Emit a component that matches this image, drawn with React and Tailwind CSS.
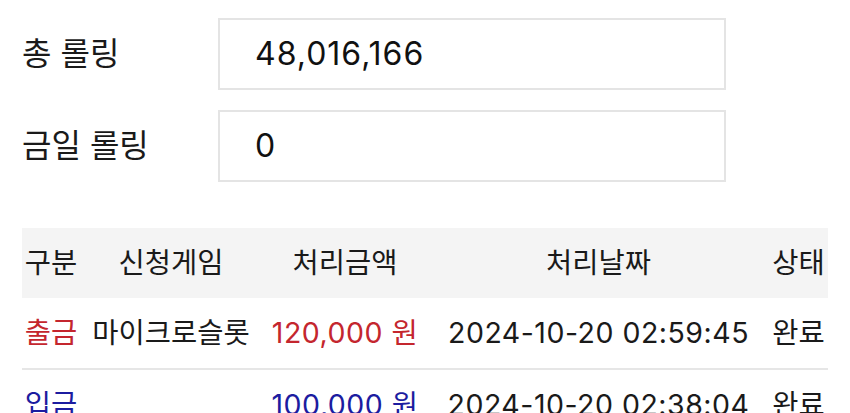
const font = { fontFamily: 'Inter, "Noto Sans CJK KR", sans-serif' };

const rows = [
  { type: '출금', game: '마이크로슬롯', amount: '120,000 원', date: '2024-10-20 02:59:45', status: '완료', color: 'text-[#c4262e]' },
  { type: '입금', game: '', amount: '100,000 원', date: '2024-10-20 02:38:04', status: '완료', color: 'text-[#1c1ca0]' },
];

const cols = 'grid grid-cols-[58px_182px_166px_341px_59px] text-center';

const Field = ({ label, value }) => (
  <div className="flex items-center">
    <div className="w-[196px] text-[32px] text-[#1a1a1a]">{label}</div>
    <div className="w-[508px] h-[72px] border-2 border-[#e4e4e4] flex items-center pl-[35px] text-[32px] tracking-[1px] text-[#111]">
      {value}
    </div>
  </div>
);

const App = () => (
  <div className="w-[850px] h-[413px] overflow-hidden bg-white pl-[22px] pt-[18px]" style={font}>
    <div className="flex flex-col gap-[20px]">
      <Field label="총 롤링" value="48,016,166" />
      <Field label="금일 롤링" value="0" />
    </div>
    <div className="mt-[46px] w-[806px] text-[28.5px] text-[#1a1a1a]">
      <div className={`${cols} h-[70px] items-center bg-[#f4f4f4]`}>
        <div>구분</div>
        <div>신청게임</div>
        <div>처리금액</div>
        <div>처리날짜</div>
        <div>상태</div>
      </div>
      {rows.map((r, i) => (
        <div key={i} className={`${cols} h-[72px] items-center border-b-2 border-[#e6e6e6]`}>
          <div className={r.color}>{r.type}</div>
          <div>{r.game}</div>
          <div className={`${r.color} tracking-[0.5px]`}>{r.amount}</div>
          <div className="tracking-[0.5px]">{r.date}</div>
          <div>{r.status}</div>
        </div>
      ))}
    </div>
  </div>
);

export default App;
